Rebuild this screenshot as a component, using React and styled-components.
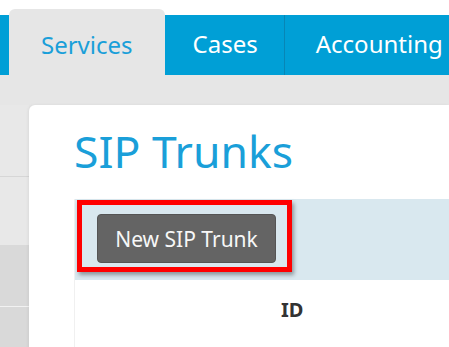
import React from "react";
import styled, { createGlobalStyle } from "styled-components";

const Global = createGlobalStyle`
  html, body { margin: 0; padding: 0; background: #e6e6e6; }
  body { font-family: "Noto Sans", "Open Sans", sans-serif; overflow: hidden; }
  * { box-sizing: border-box; }
`;

const Page = styled.div`
  width: 449px;
  height: 347px;
  overflow: hidden;
  background: #e6e6e6;
`;

const Header = styled.div`
  background: #ffffff;
  padding-top: 15px;
`;

const NavBar = styled.nav`
  display: flex;
  height: 60px;
  background: #009fd6;
  padding-left: 9px;
  white-space: nowrap;
`;

const Tab = styled.div`
  position: relative;
  flex: none;
  display: flex;
  align-items: center;
  padding: ${(p) => p.$pad};
  font-size: 24px;
  color: ${(p) => (p.$active ? "#1a9fd9" : "#ffffff")};
  background: ${(p) => (p.$active ? "#e6e6e6" : "transparent")};
  border-right: ${(p) => (p.$divider ? "1px solid #0786b6" : "none")};
  border-radius: ${(p) => (p.$active ? "6px 6px 0 0" : "0")};
  margin-top: ${(p) => (p.$active ? "-6px" : "0")};
  height: ${(p) => (p.$active ? "66px" : "60px")};
`;

const Body = styled.div`
  display: flex;
  padding-top: 30px;
`;

const Sidebar = styled.aside`
  flex: none;
  width: 29px;
  display: flex;
  flex-direction: column;
`;

const SideItem = styled.div`
  height: ${(p) => p.$h}px;
  background: ${(p) => p.$bg};
  border-bottom: ${(p) => (p.$line ? `1px solid ${p.$line}` : "none")};
`;

const Card = styled.main`
  flex: 1;
  min-width: 0;
  height: 260px;
  background: #ffffff;
  border-radius: 6px 0 0 0;
  box-shadow: -1px 0 3px rgba(0, 0, 0, 0.06);
  padding: 16px 0 0 45px;
`;

const Title = styled.h1`
  margin: 0 0 18px 0;
  font-size: 44.5px;
  font-weight: 400;
  line-height: 60px;
  color: #1a9fd9;
  white-space: nowrap;
`;

const Table = styled.div`
  border-left: 1px solid #f0f0f0;
`;

const Toolbar = styled.div`
  height: 81px;
  background: #d9e8ef;
  padding: 1px 0 0 2px;
`;

const Highlight = styled.div`
  display: inline-block;
  border: 5px solid #ff0000;
  padding: 9px 11px 4px 15px;
  box-shadow: 2px 3px 4px rgba(0, 0, 0, 0.35);
`;

const Button = styled.button`
  display: block;
  width: 179px;
  height: 49px;
  padding: 0;
  border: 1px solid #555555;
  border-radius: 4px;
  background: #646464;
  color: #f7f7f7;
  font-family: "Noto Sans", "Open Sans", sans-serif;
  font-size: 21px;
  white-space: nowrap;
`;

const HeadRow = styled.div`
  display: flex;
  height: 70px;
  align-items: flex-start;
  padding-top: 16px;
`;

const HeadCell = styled.div`
  padding-left: 206px;
  font-size: 20px;
  font-weight: 700;
  color: #333333;
`;

export default function App() {
  return (
    <Page>
      <Global />
      <Header>
        <NavBar>
          <Tab $active $pad="4px 32px 0 32px">Services</Tab>
          <Tab $divider $pad="0 26px 4px 28px">Cases</Tab>
          <Tab $pad="0 30px 4px 31px">Accounting</Tab>
        </NavBar>
      </Header>
      <Body>
        <Sidebar>
          <SideItem $h={72} $bg="#e8e8e8" $line="#d6d6d6" />
          <SideItem $h={68} $bg="#e8e8e8" />
          <SideItem $h={62} $bg="#d9d9d9" $line="#f2f2f2" />
          <SideItem $h={60} $bg="#d9d9d9" />
        </Sidebar>
        <Card>
          <Title>SIP Trunks</Title>
          <Table>
            <Toolbar>
              <Highlight>
                <Button>New SIP Trunk</Button>
              </Highlight>
            </Toolbar>
            <HeadRow>
              <HeadCell>ID</HeadCell>
            </HeadRow>
          </Table>
        </Card>
      </Body>
    </Page>
  );
}
